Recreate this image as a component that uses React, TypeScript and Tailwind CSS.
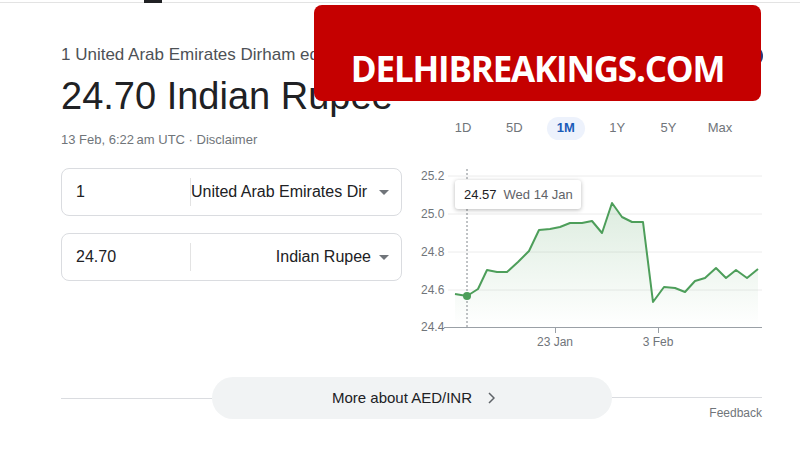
import React from "react"

const tabs = ["1D", "5D", "1M", "1Y", "5Y", "Max"]

// page coordinates, svg viewBox matches them
const points: [number, number][] = [
  [455, 295], [467, 297], [478, 290], [487, 271], [497, 273], [507, 273],
  [518, 263], [529, 252], [539, 231], [550, 230], [560, 228], [570, 224],
  [582, 224], [592, 222], [602, 234], [612, 204], [622, 218], [632, 223],
  [643, 223], [653, 303], [664, 288], [675, 289], [685, 293], [695, 282],
  [705, 279], [716, 269], [726, 279], [736, 271], [747, 279], [758, 270],
]

const linePath = points.map((p, i) => `${i ? "L" : "M"}${p[0]} ${p[1]}`).join(" ")
const areaPath = `${linePath} L758 328 L455 328 Z`

const yLabels = [
  { v: "25.2", y: 177 },
  { v: "25.0", y: 215 },
  { v: "24.8", y: 253 },
  { v: "24.6", y: 291 },
  { v: "24.4", y: 328 },
]

function Caret() {
  return (
    <svg width="10" height="5" viewBox="0 0 10 5" className="shrink-0">
      <path d="M0 0h10L5 5z" fill="#70757a" />
    </svg>
  )
}

function CurrencyField({ amount, currency, long }: { amount: string; currency: string; long?: boolean }) {
  return (
    <div className="flex h-12 items-center rounded-lg border border-[#dadce0] bg-white">
      <div className="w-[128px] pl-[14px] text-base text-[#202124]">{amount}</div>
      <div className="h-7 w-px bg-[#e3e3e3]" />
      <div
        className={
          long
            ? "w-[180px] whitespace-nowrap text-left text-base text-[#202124]"
            : "w-[180px] whitespace-nowrap text-right text-base text-[#202124]"
        }
      >
        {currency}
      </div>
      <div className="flex flex-1 justify-center pr-[4px]">
        <Caret />
      </div>
    </div>
  )
}

function Chart() {
  return (
    <div className="relative h-[190px] w-[342px]">
      <svg width="342" height="190" viewBox="420 165 342 190" className="block">
        <defs>
          <linearGradient id="fill" x1="0" y1="200" x2="0" y2="328" gradientUnits="userSpaceOnUse">
            <stop offset="0" stopColor="#4d9e5a" stopOpacity="0.2" />
            <stop offset="1" stopColor="#4d9e5a" stopOpacity="0" />
          </linearGradient>
        </defs>
        {yLabels.slice(0, 4).map((l) => (
          <line key={l.v} x1="448" x2="762" y1={l.y} y2={l.y} stroke="#ececec" strokeWidth="1" />
        ))}
        {yLabels.map((l) => (
          <text key={l.v} x="421" y={l.y + 4} fontSize="12" fill="#70757a">
            {l.v}
          </text>
        ))}
        <path d={areaPath} fill="url(#fill)" />
        <line x1="467" x2="467" y1="170" y2="328" stroke="#80868b" strokeWidth="1" strokeDasharray="2 2" />
        <line x1="444" x2="762" y1="328.5" y2="328.5" stroke="#9aa0a6" strokeWidth="1" />
        <line x1="555.5" x2="555.5" y1="328" y2="334" stroke="#9aa0a6" strokeWidth="1" />
        <line x1="658.5" x2="658.5" y1="328" y2="334" stroke="#9aa0a6" strokeWidth="1" />
        <path d={linePath} fill="none" stroke="#4d9e5a" strokeWidth="2" strokeLinejoin="round" />
        <circle cx="467" cy="297" r="4" fill="#4d9e5a" />
        <text x="555" y="347" fontSize="12" fill="#70757a" textAnchor="middle">
          23 Jan
        </text>
        <text x="658" y="347" fontSize="12" fill="#70757a" textAnchor="middle">
          3 Feb
        </text>
      </svg>
      <div className="absolute left-[35px] top-[16px] flex h-[29px] w-[126px] items-center rounded-[3px] bg-white pl-[9px] text-[13px] shadow-[0_1px_4px_rgba(0,0,0,0.28)]">
        <span className="text-[#202124]">24.57</span>
        <span className="ml-[7px] text-[#5f6368]">Wed 14 Jan</span>
      </div>
    </div>
  )
}

export default function App() {
  return (
    <div className="relative h-[470px] w-[800px] overflow-hidden bg-white font-['Liberation_Sans',Arial,sans-serif]">
      {/* top strip */}
      <div className="h-[3px] border-b border-[#e3e3e3]">
        <div className="ml-[144px] h-[3px] w-[18px] bg-[#202124]" />
      </div>

      <div className="flex gap-[18px] pl-[61px] pt-[42px]">
        {/* converter */}
        <div className="w-[341px]">
          <p className="whitespace-nowrap text-[17px] leading-5 text-[#4d5156]">
            1 United Arab Emirates Dirham equals
          </p>
          <h1 className="mt-[7px] whitespace-nowrap text-[38px] leading-[48px] text-[#202124]">
            24.70 Indian Rupee
          </h1>
          <p className="mt-[12px] text-[13px] leading-4 text-[#70757a]">
            13 Feb, 6:22{"\u202f"}am UTC · <span>Disclaimer</span>
          </p>
          <div className="mt-[20px]">
            <CurrencyField amount="1" currency="United Arab Emirates Dir" long />
          </div>
          <div className="mt-[17px]">
            <CurrencyField amount="24.70" currency="Indian Rupee" />
          </div>
        </div>

        {/* chart */}
        <div className="w-[342px]">
          <div className="mt-[72px] flex h-[22px] items-center gap-[13.4px] pl-[24px]">
            {tabs.map((t) => (
              <div
                key={t}
                className={
                  t === "1M"
                    ? "flex h-[23px] w-[38px] items-center justify-center rounded-full bg-[#edf2fc] text-[13px] font-bold text-[#1a5bb8]"
                    : "flex h-[23px] w-[38px] items-center justify-center text-[13px] text-[#70757a]"
                }
              >
                {t}
              </div>
            ))}
          </div>
          <div className="mt-[25px]">
            <Chart />
          </div>
        </div>
      </div>

      {/* more about */}
      <div className="mx-[38px] ml-[61px] mt-[23px] flex items-start">
        <div className="mt-[21px] h-px flex-1 bg-[#dadce0]" />
        <div className="flex h-[42px] w-[400px] items-center justify-center gap-[16px] rounded-full bg-[#f1f3f4] pl-[4px] text-[15px] font-medium text-[#202124]">
          <span>More about AED/INR</span>
          <svg width="7" height="12" viewBox="0 0 7 12">
            <path d="M1 1l5 5-5 5" fill="none" stroke="#5f6368" strokeWidth="1.5" />
          </svg>
        </div>
        <div className="flex flex-1 flex-col">
          <div className="h-[21px] border-b border-[#dadce0]" />
          <div className="pt-[7px] text-right text-[12px] leading-4 text-[#70757a]">Feedback</div>
        </div>
      </div>

      {/* partly hidden icon behind banner */}
      <div className="absolute left-[741px] top-[45px] h-[22px] w-[22px] rounded-full bg-[#283a7c]" />

      {/* watermark banner */}
      <div className="absolute left-[314px] top-[5px] flex h-[96px] w-[447px] items-center justify-center rounded-[8px] bg-[#c50000] pt-[30px]">
        <span className="font-['Open_Sans',sans-serif] text-[35px] font-bold leading-none tracking-[-1.2px] text-white">
          DELHIBREAKINGS.COM
        </span>
      </div>
    </div>
  )
}
